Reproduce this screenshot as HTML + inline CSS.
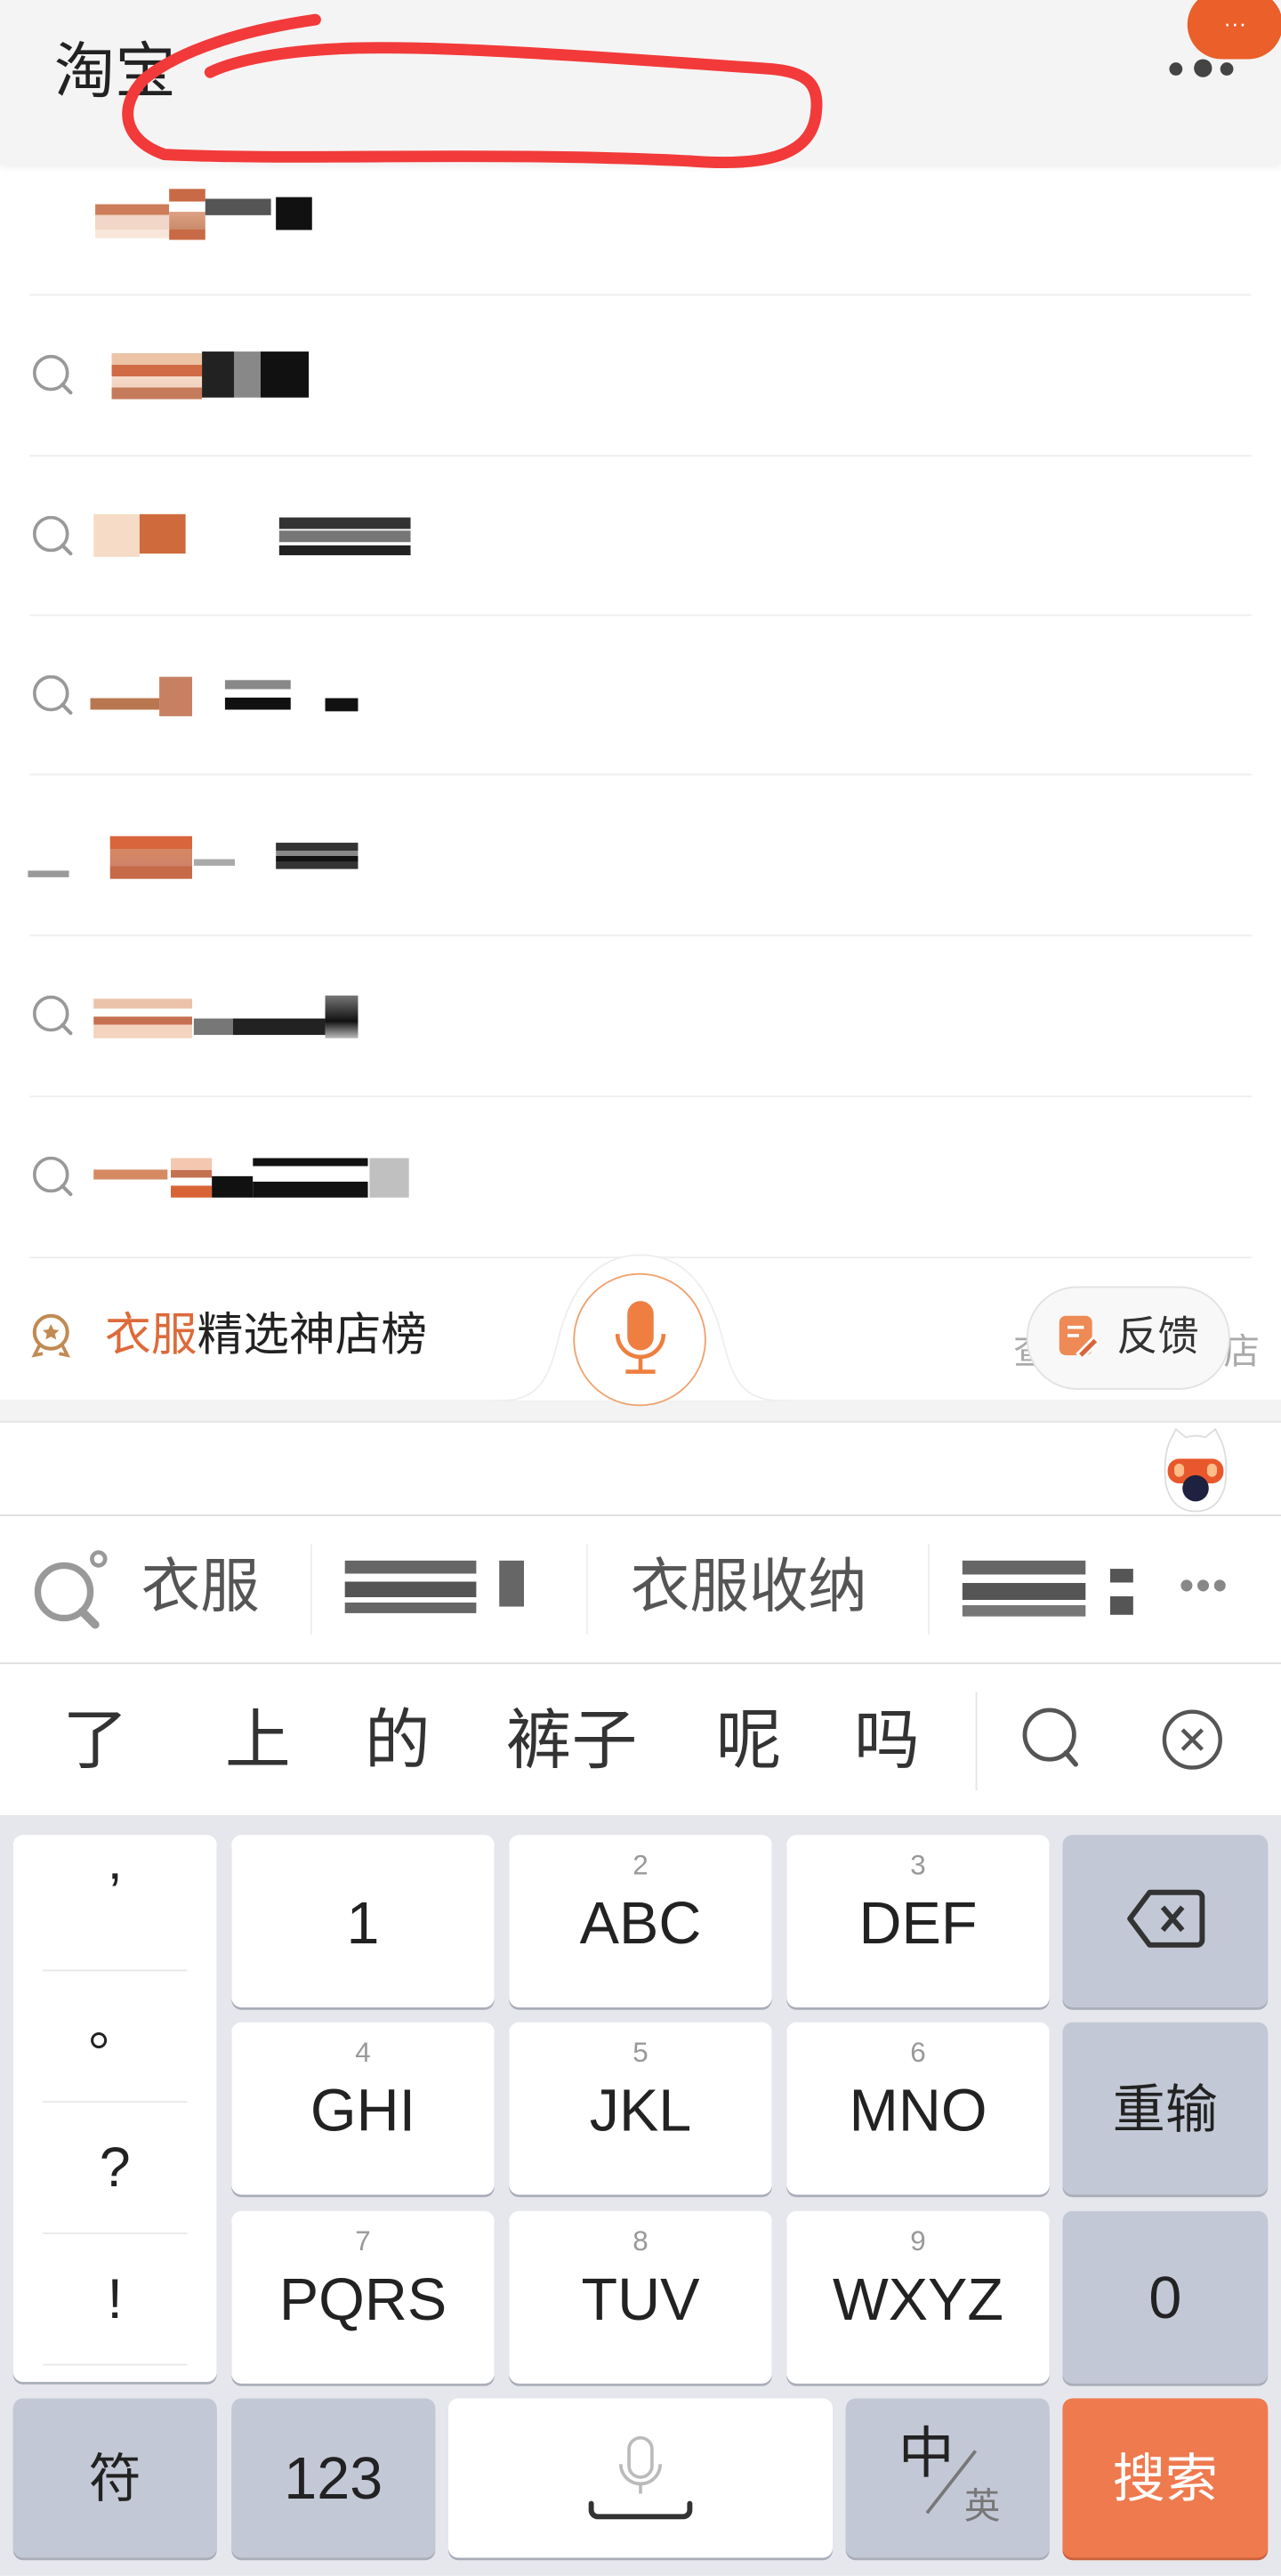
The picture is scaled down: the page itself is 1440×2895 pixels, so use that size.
<!DOCTYPE html>
<html><head><meta charset="utf-8">
<style>
html,body{margin:0;padding:0;width:1440px;height:2893px;overflow:hidden;background:#fff}
#s{position:absolute;left:0;top:0;width:780px;height:1568px;transform:scale(1.84615);transform-origin:0 0;font-family:"Liberation Sans","Noto Sans CJK SC",sans-serif;background:#fff}
.a{position:absolute}
.sep{position:absolute;left:18px;width:744px;height:1px;background:#eee}
.k{position:absolute;background:#fff;border-radius:6px;box-shadow:0 1.5px 0 #a9adb8;text-align:center;color:#222}
.g{background:#c3c8d6}
.n{position:absolute;left:0;right:0;top:10px;font-size:17px;color:#999;line-height:17px}
.l{position:absolute;left:0;right:0;top:29px;font-size:36px;line-height:50px}
.q{position:absolute;left:20px;width:26px;height:26px}
.px{position:absolute}
</style></head><body><div id="s">
<!-- header -->
<div class="a" style="left:0;top:0;width:780px;height:100px;background:#f5f4f4;box-shadow:0 2px 4px rgba(0,0,0,0.06)"></div>
<div class="a" style="left:33px;top:20px;font-size:37px;color:#222;line-height:48px">淘宝</div>
<svg class="a" style="left:60px;top:0" width="450" height="110" viewBox="60 0 450 110"><path d="M192 12 C150 18 110 30 88 48 C72 64 74 85 100 94 C180 98 300 92 420 98 C470 102 495 93 497 68 C499 50 490 44 470 42 C380 36 260 26 200 30 C165 32 140 38 128 44" fill="none" stroke="#f23a3a" stroke-width="7" stroke-linecap="round"/></svg>
<div class="a" style="left:723px;top:-6px;width:58px;height:42px;border-radius:22px;background:#ea5f2a;color:#fff;font-size:14px;text-align:center;line-height:40px">···</div>
<div class="a" style="left:712px;top:38px;width:8px;height:8px;border-radius:4px;background:#444"></div>
<div class="a" style="left:727px;top:36px;width:11px;height:11px;border-radius:6px;background:#444"></div>
<div class="a" style="left:743px;top:38px;width:8px;height:8px;border-radius:4px;background:#444"></div>
<!-- list -->
<div class="sep" style="top:179px"></div><div class="sep" style="top:277px"></div><div class="sep" style="top:374px"></div><div class="sep" style="top:471px"></div><div class="sep" style="top:569px"></div><div class="sep" style="top:667px"></div><div class="sep" style="top:765px"></div>
<svg width="0" height="0" style="position:absolute"><defs><g id="sq"><circle cx="11" cy="11" r="10" fill="none" stroke="#999" stroke-width="2"/><path d="M18 18 L23 23" stroke="#999" stroke-width="2.2" stroke-linecap="round"/></g></defs></svg>
<svg class="q" style="top:216px"><use href="#sq"/></svg>
<svg class="q" style="top:314px"><use href="#sq"/></svg>
<svg class="q" style="top:411px"><use href="#sq"/></svg>
<svg class="q" style="top:606px"><use href="#sq"/></svg>
<svg class="q" style="top:704px"><use href="#sq"/></svg>
<!-- pixel blocks -->
<div class="px" style="left:58px;top:119px;width:45px;height:26px;background:linear-gradient(#fff 20%,#cd7d59 20%,#cd7d59 45%,#f2d6c7 45%,#f2d6c7 80%,#f8e6da 80%)"></div>
<div class="px" style="left:103px;top:115px;width:22px;height:31px;background:linear-gradient(#c86a45 25%,#fff 25%,#fff 45%,#dda283 45%,#c98a6a 80%,#c86a45 80%)"></div>
<div class="px" style="left:125px;top:121px;width:40px;height:10px;background:#555"></div>
<div class="px" style="left:168px;top:120px;width:22px;height:20px;background:#111"></div>
<div class="px" style="left:68px;top:215px;width:55px;height:28px;background:linear-gradient(#ecc3a5 25%,#d06b45 25%,#d06b45 50%,#f6dcc9 50%,#f2d2bf 75%,#c57b5b 75%)"></div>
<div class="px" style="left:123px;top:214px;width:65px;height:28px;background:linear-gradient(90deg,#222 0 30%,#888 30% 55%,#111 55%)"></div>
<div class="px" style="left:57px;top:313px;width:28px;height:26px;background:#f6dcc6"></div>
<div class="px" style="left:85px;top:313px;width:28px;height:24px;background:#cf6a3c"></div>
<div class="px" style="left:170px;top:315px;width:80px;height:7px;background:#333"></div>
<div class="px" style="left:170px;top:323px;width:80px;height:7px;background:#777"></div>
<div class="px" style="left:170px;top:332px;width:80px;height:6px;background:#222"></div>
<div class="px" style="left:55px;top:425px;width:42px;height:7px;background:#b8774f"></div>
<div class="px" style="left:97px;top:412px;width:20px;height:24px;background:#c78162"></div>
<div class="px" style="left:137px;top:414px;width:40px;height:18px;background:linear-gradient(#888 30%,#fff 30%,#fff 60%,#111 60%)"></div>
<div class="px" style="left:198px;top:425px;width:20px;height:8px;background:#111"></div>
<div class="px" style="left:17px;top:530px;width:25px;height:4px;background:#999"></div>
<div class="px" style="left:67px;top:509px;width:50px;height:26px;background:linear-gradient(#d8653b 30%,#d58863 30%,#d0836a 70%,#c66a48 70%)"></div>
<div class="px" style="left:118px;top:523px;width:25px;height:4px;background:#aaa"></div>
<div class="px" style="left:168px;top:513px;width:50px;height:16px;background:linear-gradient(#333 30%,#888 30%,#888 50%,#111 50%,#111 70%,#333 70%)"></div>
<div class="px" style="left:57px;top:608px;width:60px;height:24px;background:linear-gradient(#ebc3aa 25%,#fff 25%,#fff 45%,#c57050 45%,#c57050 65%,#f4d3bf 65%)"></div>
<div class="px" style="left:118px;top:620px;width:80px;height:10px;background:linear-gradient(90deg,#777 0 30%,#222 30%)"></div>
<div class="px" style="left:198px;top:606px;width:20px;height:26px;background:linear-gradient(#777,#111 60%,#bbb)"></div>
<div class="px" style="left:57px;top:712px;width:45px;height:6px;background:#d58a62"></div>
<div class="px" style="left:104px;top:705px;width:25px;height:24px;background:linear-gradient(#f3c7b0 30%,#c47151 30%,#c47151 50%,#fff 50%,#fff 70%,#d86436 70%)"></div>
<div class="px" style="left:129px;top:716px;width:25px;height:13px;background:#111"></div>
<div class="px" style="left:154px;top:705px;width:70px;height:24px;background:linear-gradient(#111 20%,#fff 20%,#fff 60%,#111 60%)"></div>
<div class="px" style="left:225px;top:705px;width:24px;height:24px;background:#c0c0c0"></div>
<!-- rank bar -->
<div class="a" style="left:0;top:852px;width:780px;height:13px;background:#f3f3f3;border-bottom:1px solid #e4e4e4"></div>
<svg class="a" style="left:300px;top:758px" width="180" height="100" viewBox="300 758 180 100"><path d="M300 853 C325 853 333 845 340 815 C350 775 370 764 390 764 C410 764 430 775 440 815 C447 845 455 853 480 853 Z" fill="#fff" stroke="#eee" stroke-width="1"/><rect x="300" y="853" width="180" height="6" fill="#f3f3f3"/></svg>
<svg class="a" style="left:18px;top:798px" width="28" height="32" viewBox="0 0 28 32"><circle cx="13" cy="13" r="10" fill="none" stroke="#c08a52" stroke-width="2.2"/><path d="M13 8 l1.6 3.3 3.4.4-2.5 2.3.7 3.4-3.2-1.7-3.2 1.7.7-3.4-2.5-2.3 3.4-.4z" fill="#c08a52"/><path d="M6 21 l-3 6 5-1 M20 21 l3 6-5-1" fill="none" stroke="#c08a52" stroke-width="2"/></svg>
<div class="a" style="left:64px;top:794px;font-size:28px;line-height:38px;color:#222"><span style="color:#dd6a3a">衣服</span>精选神店榜</div>
<div class="a" style="left:349px;top:775px;width:79px;height:79px;border-radius:50%;border:1.5px solid #f0a26e;background:#fff"></div>
<svg class="a" style="left:370px;top:790px" width="40" height="50" viewBox="0 0 40 50"><rect x="12" y="2" width="16" height="30" rx="8" fill="#ee7f40"/><path d="M6 22 a14 14 0 0 0 28 0" fill="none" stroke="#ee7f40" stroke-width="2.5"/><path d="M20 36 v8 M11 45 h18" stroke="#ee7f40" stroke-width="2.5"/></svg>
<div class="a" style="left:617px;top:805px;font-size:22px;color:#aaa">查</div>
<div class="a" style="left:745px;top:805px;font-size:22px;color:#aaa">店</div>
<div class="a" style="left:625px;top:783px;width:122px;height:61px;border-radius:31px;background:#f8f8f8;border:1.5px solid #e2e2e2"></div>
<svg class="a" style="left:644px;top:800px" width="26" height="28" viewBox="0 0 26 28"><rect x="1" y="1" width="20" height="24" rx="4" fill="#ee8a55"/><path d="M6 8 h10 M6 13 h7" stroke="#fff" stroke-width="2"/><path d="M12 24 l10-10 3 3-10 10z" fill="#d9653a" stroke="#fff" stroke-width="1.5"/></svg>
<div class="a" style="left:680px;top:797px;font-size:25px;line-height:34px;color:#333">反馈</div>
<!-- mascot -->
<svg class="a" style="left:706px;top:868px" width="44" height="56" viewBox="0 0 44 56"><path d="M6 10 L10 2 L16 7 Q22 5 28 7 L34 2 L38 10 Q42 20 40 36 Q36 52 22 52 Q8 52 4 36 Q2 20 6 10z" fill="#fff" stroke="#ddd"/><rect x="5" y="20" width="34" height="15" rx="7" fill="#e8582c"/><rect x="9" y="23" width="6" height="8" rx="3" fill="#ffbd8a"/><rect x="29" y="23" width="6" height="8" rx="3" fill="#ffbd8a"/><circle cx="22" cy="38" r="8" fill="#1e2140"/></svg>
<div class="a" style="left:0;top:922px;width:780px;height:1px;background:#ddd"></div>
<!-- suggestions -->
<svg class="a" style="left:18px;top:940px" width="52" height="54" viewBox="0 0 52 54"><circle cx="21" cy="29" r="16" fill="none" stroke="#999" stroke-width="4"/><path d="M32 41 l8 8" stroke="#999" stroke-width="5" stroke-linecap="round"/><circle cx="42" cy="9" r="4" fill="none" stroke="#999" stroke-width="2.5"/></svg>
<div class="a" style="left:86px;top:942px;font-size:36px;line-height:48px;color:#555">衣服</div>
<div class="a" style="left:189px;top:940px;width:1px;height:55px;background:#eee"></div>
<div class="px" style="left:210px;top:950px;width:80px;height:32px;background:linear-gradient(#666 0 25%,#fff 25% 40%,#555 40% 70%,#fff 70% 80%,#666 80%)"></div>
<div class="px" style="left:304px;top:950px;width:30px;height:28px;background:linear-gradient(90deg,#666 0 50%,#fff 50%)"></div>
<div class="a" style="left:357px;top:940px;width:1px;height:55px;background:#eee"></div>
<div class="a" style="left:384px;top:942px;font-size:36px;line-height:48px;color:#555">衣服收纳</div>
<div class="a" style="left:565px;top:940px;width:1px;height:55px;background:#eee"></div>
<div class="px" style="left:586px;top:950px;width:75px;height:34px;background:linear-gradient(#666 0 25%,#fff 25% 40%,#555 40% 70%,#fff 70% 80%,#777 80%)"></div>
<div class="px" style="left:676px;top:955px;width:14px;height:28px;background:linear-gradient(#555 0 30%,#fff 30% 60%,#555 60%)"></div>
<div class="a" style="left:718px;top:950px;font-size:26px;color:#888;letter-spacing:1px">•••</div>
<div class="a" style="left:0;top:1012px;width:780px;height:1px;background:#ddd"></div>
<!-- candidates -->
<div class="a" style="left:38px;top:1034px;font-size:40px;line-height:52px;color:#333">了</div>
<div class="a" style="left:137px;top:1034px;font-size:40px;line-height:52px;color:#333">上</div>
<div class="a" style="left:222px;top:1034px;font-size:40px;line-height:52px;color:#333">的</div>
<div class="a" style="left:308px;top:1034px;font-size:40px;line-height:52px;color:#333">裤子</div>
<div class="a" style="left:436px;top:1034px;font-size:40px;line-height:52px;color:#333">呢</div>
<div class="a" style="left:520px;top:1034px;font-size:40px;line-height:52px;color:#333">吗</div>
<div class="a" style="left:594px;top:1030px;width:1px;height:60px;background:#e5e5e5"></div>
<svg class="a" style="left:620px;top:1038px" width="42" height="42" viewBox="0 0 42 42"><circle cx="19" cy="18" r="15" fill="none" stroke="#555" stroke-width="2.6"/><path d="M29 29 l6 7" stroke="#555" stroke-width="3" stroke-linecap="round"/></svg>
<svg class="a" style="left:706px;top:1039px" width="40" height="40" viewBox="0 0 40 40"><circle cx="20" cy="20" r="17" fill="none" stroke="#555" stroke-width="2.4"/><path d="M14 14 l12 12 M26 14 l-12 12" stroke="#555" stroke-width="2.4"/></svg>
<!-- keyboard -->
<div class="a" style="left:0;top:1105px;width:780px;height:463px;background:#e6e7ec"></div>
<div class="k" style="left:8px;top:1117px;width:124px;height:333px">
 <div class="a" style="left:0;right:0;top:6px;font-size:34px;line-height:60px">’</div>
 <div class="a" style="left:18px;right:18px;top:82px;height:1px;background:#e8e8e8"></div>
 <div class="a" style="left:0;right:0;top:92px;font-size:32px;line-height:50px">。</div>
 <div class="a" style="left:18px;right:18px;top:162px;height:1px;background:#e8e8e8"></div>
 <div class="a" style="left:0;right:0;top:178px;font-size:34px;line-height:50px">?</div>
 <div class="a" style="left:18px;right:18px;top:242px;height:1px;background:#e8e8e8"></div>
 <div class="a" style="left:0;right:0;top:258px;font-size:34px;line-height:50px">!</div>
 <div class="a" style="left:18px;right:18px;top:322px;height:1px;background:#e8e8e8"></div>
</div>
<div class="k" style="left:141px;top:1117px;width:160px;height:105px"><div class="l">1</div></div>
<div class="k" style="left:310px;top:1117px;width:160px;height:105px"><div class="n">2</div><div class="l">ABC</div></div>
<div class="k" style="left:479px;top:1117px;width:160px;height:105px"><div class="n">3</div><div class="l">DEF</div></div>
<div class="k g" style="left:647px;top:1117px;width:125px;height:105px"><svg style="margin-top:32px" width="48" height="38" viewBox="0 0 48 38"><path d="M14 3 H43 a3 3 0 0 1 3 3 V32 a3 3 0 0 1-3 3 H14 L2 19z" fill="none" stroke="#333" stroke-width="3.2" stroke-linejoin="round"/><path d="M22 12 l12 14 M34 12 l-12 14" stroke="#333" stroke-width="3.2"/></svg></div>
<div class="k" style="left:141px;top:1231px;width:160px;height:105px"><div class="n">4</div><div class="l">GHI</div></div>
<div class="k" style="left:310px;top:1231px;width:160px;height:105px"><div class="n">5</div><div class="l">JKL</div></div>
<div class="k" style="left:479px;top:1231px;width:160px;height:105px"><div class="n">6</div><div class="l">MNO</div></div>
<div class="k g" style="left:647px;top:1231px;width:125px;height:105px"><div class="a" style="left:0;right:0;top:28px;font-size:32px;line-height:50px">重输</div></div>
<div class="k" style="left:141px;top:1346px;width:160px;height:105px"><div class="n">7</div><div class="l">PQRS</div></div>
<div class="k" style="left:310px;top:1346px;width:160px;height:105px"><div class="n">8</div><div class="l">TUV</div></div>
<div class="k" style="left:479px;top:1346px;width:160px;height:105px"><div class="n">9</div><div class="l">WXYZ</div></div>
<div class="k g" style="left:647px;top:1346px;width:125px;height:105px"><div class="l" style="top:28px">0</div></div>
<div class="k g" style="left:8px;top:1460px;width:124px;height:97px"><div class="a" style="left:0;right:0;top:24px;font-size:32px;line-height:50px">符</div></div>
<div class="k g" style="left:141px;top:1460px;width:124px;height:97px"><div class="a" style="left:0;right:0;top:24px;font-size:36px;line-height:50px">123</div></div>
<div class="k" style="left:273px;top:1460px;width:234px;height:97px"><svg style="margin-top:22px" width="70" height="56" viewBox="0 0 70 56"><rect x="28" y="2" width="14" height="24" rx="7" fill="none" stroke="#bbb" stroke-width="2"/><path d="M23 18 a12 12 0 0 0 24 0 M35 30 v6" fill="none" stroke="#bbb" stroke-width="2"/><path d="M5 42 v4 a4 4 0 0 0 4 4 H61 a4 4 0 0 0 4-4 v-4" fill="none" stroke="#333" stroke-width="3.2" stroke-linecap="round"/></svg></div>
<div class="k g" style="left:515px;top:1460px;width:124px;height:97px"><div class="a" style="left:32px;top:10px;font-size:34px;line-height:48px">中</div><div class="a" style="left:40px;top:50px;width:48px;height:1.5px;background:#777;transform:rotate(-52deg)"></div><div class="a" style="left:72px;top:50px;font-size:22px;line-height:32px;color:#777">英</div></div>
<div class="k" style="left:647px;top:1460px;width:125px;height:97px;background:#ee7a4e;box-shadow:0 1.5px 0 #c8613c"><div class="a" style="left:0;right:0;top:24px;font-size:32px;line-height:50px;color:#fff">搜索</div></div>
</div></body></html>
